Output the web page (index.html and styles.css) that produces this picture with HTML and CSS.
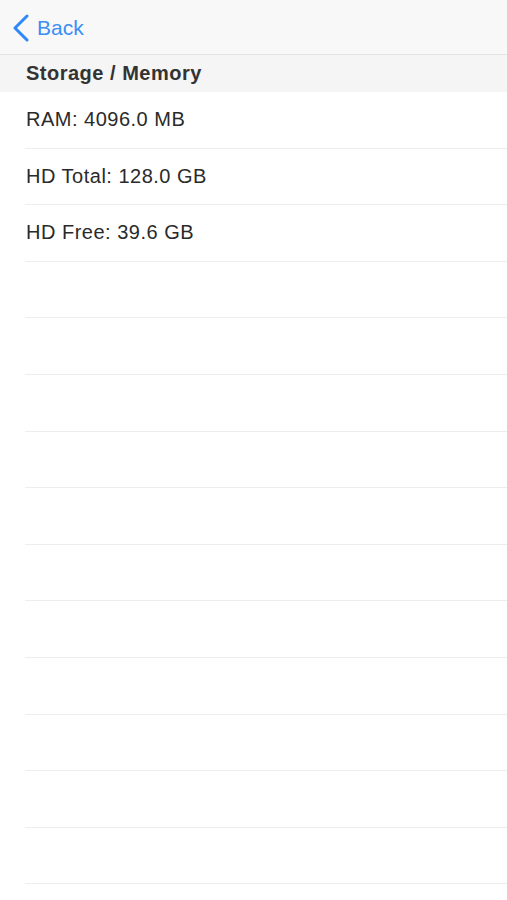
FILE: index.html
```html
<!DOCTYPE html>
<html>
<head>
  <meta charset="UTF-8" />
  <title>Storage / Memory</title>
  <link rel="stylesheet" href="styles.css">
</head>
<body>
  <div class="navbar">
    <a class="back" href="#">
      <svg class="chevron" width="18" height="28" viewBox="0 0 18 28">
        <path d="M15 2 L3 14 L15 26" fill="none" stroke="#2f88f5" stroke-width="3" stroke-linecap="round" stroke-linejoin="round"/>
      </svg>
      <span>Back</span>
    </a>
  </div>

  <div class="section">Storage / Memory</div>

  <div class="list">
    <div class="row">RAM: 4096.0 MB</div>
    <div class="row">HD Total: 128.0 GB</div>
    <div class="row">HD Free: 39.6 GB</div>
    <div class="row"></div>
    <div class="row"></div>
    <div class="row"></div>
    <div class="row"></div>
    <div class="row"></div>
    <div class="row"></div>
    <div class="row"></div>
    <div class="row"></div>
    <div class="row"></div>
    <div class="row"></div>
    <div class="row"></div>
    <div class="row"></div>
  </div>
</body>
</html>
```

FILE: styles.css
```css
body {
  margin: 0;
  background: #fff;
  font-family: "Liberation Sans", Arial, sans-serif;
  color: #222;
  overflow: hidden;
}
.navbar {
  height: 55px;
  background: #f8f8f8;
  border-bottom: 1px solid #e4e4e4;
  box-sizing: border-box;
  display: flex;
  align-items: center;
  padding-left: 12px;
  padding-top: 1px;
}
.back {
  display: flex;
  align-items: center;
  gap: 7px;
  color: #3a8ef6;
  text-decoration: none;
  font-size: 21px;
}
.section {
  height: 37px;
  background: #f5f5f5;
  display: flex;
  align-items: center;
  padding-left: 26px;
  font-size: 20px;
  letter-spacing: 0.5px;
  font-weight: bold;
  color: #333;
}
.list {
  padding-left: 25px;
}
.row {
  height: 56.6px;
  box-sizing: border-box;
  border-bottom: 1px solid #ededed;
  display: flex;
  align-items: center;
  padding-left: 1px;
  font-size: 20px;
  letter-spacing: 0.5px;
  color: #2a2a2a;
}
```
